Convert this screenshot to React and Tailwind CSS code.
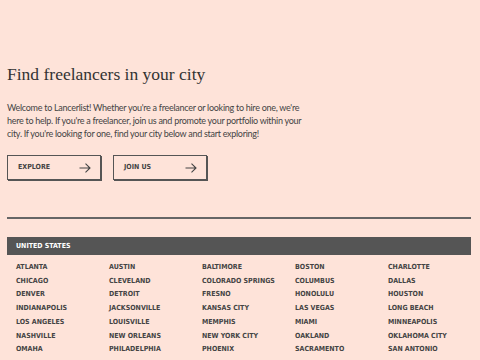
import React from "react";

const cities = [
  ["ATLANTA", "AUSTIN", "BALTIMORE", "BOSTON", "CHARLOTTE"],
  ["CHICAGO", "CLEVELAND", "COLORADO SPRINGS", "COLUMBUS", "DALLAS"],
  ["DENVER", "DETROIT", "FRESNO", "HONOLULU", "HOUSTON"],
  ["INDIANAPOLIS", "JACKSONVILLE", "KANSAS CITY", "LAS VEGAS", "LONG BEACH"],
  ["LOS ANGELES", "LOUISVILLE", "MEMPHIS", "MIAMI", "MINNEAPOLIS"],
  ["NASHVILLE", "NEW ORLEANS", "NEW YORK CITY", "OAKLAND", "OKLAHOMA CITY"],
  ["OMAHA", "PHILADELPHIA", "PHOENIX", "SACRAMENTO", "SAN ANTONIO"],
];

function Arrow() {
  return (
    <svg width="12" height="10" viewBox="0 0 12 10" fill="none" stroke="#444" strokeWidth="1.1">
      <path d="M0.5 5H11M6.5 0.7L11 5L6.5 9.3" />
    </svg>
  );
}

function Btn({ label }) {
  return (
    <button className="w-[94px] h-[25px] flex items-center justify-between pl-[10px] pr-[9px] border border-[#555] shadow-[1px_1px_0_#555] text-[7px] font-bold text-[#444] [font-family:'DejaVu_Sans_Condensed',sans-serif]">
      <span>{label}</span>
      <Arrow />
    </button>
  );
}

export default function App() {
  return (
    <div className="w-[480px] h-[360px] overflow-hidden bg-[#fee3d9] pl-[7px] pr-[9px] pt-[63px]">
      <h1 className="text-[17.5px] leading-[22px] text-[#333] [font-family:'Liberation_Serif',serif]">
        Find freelancers in your city
      </h1>
      <p className="mt-[16px] text-[9px] leading-[13px] tracking-[-0.28px] text-[#444] w-[300px] [font-family:'Lato',sans-serif]">
        Welcome to Lancerlist! Whether you're a freelancer or looking to hire one, we're here to help. If you're a freelancer, join us and promote your portfolio within your city. If you're looking for one, find your city below and start exploring!
      </p>
      <div className="mt-[15px] flex gap-[12px]">
        <Btn label="EXPLORE" />
        <Btn label="JOIN US" />
      </div>
      <div className="mt-[37px] h-[2px] bg-[#666]" />
      <div className="mt-[18px] h-[18px] bg-[#555] flex items-center pl-[9px] text-[7px] font-bold text-white [font-family:'DejaVu_Sans_Condensed',sans-serif]">
        UNITED STATES
      </div>
      <div className="mt-[6px] pl-[9px] grid grid-cols-[93px_93px_93px_93px_93px] text-[7px] leading-[13.7px] font-bold text-[#444] [font-family:'DejaVu_Sans_Condensed',sans-serif]">
        {cities.flat().map((c) => (
          <div key={c}>{c}</div>
        ))}
      </div>
    </div>
  );
}
